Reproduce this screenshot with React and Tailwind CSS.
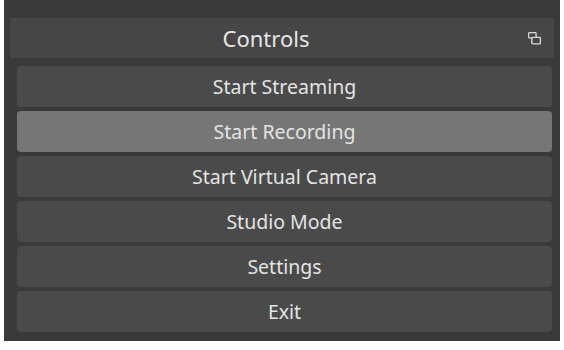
import React from 'react';

const buttons = [
  { label: 'Start Streaming' },
  { label: 'Start Recording', active: true },
  { label: 'Start Virtual Camera' },
  { label: 'Studio Mode' },
  { label: 'Settings' },
  { label: 'Exit' },
];

function FloatIcon() {
  return (
    <svg width="13" height="13" viewBox="0 0 12 12" className="text-[#d8d8d8]">
      <rect x="0.5" y="0.5" width="7" height="5" rx="1" fill="#464646" stroke="currentColor" strokeWidth="1.2" />
      <rect x="3.5" y="5" width="8" height="6" rx="1" fill="#464646" stroke="currentColor" strokeWidth="1.3" />
    </svg>
  );
}

export default function App() {
  return (
    <div className="w-[564px] h-[350px] bg-white pl-[4px] pr-[4px] font-['Noto_Sans',sans-serif]">
      <div className="h-[341px] bg-[#3a3a3a] pt-[18px] flex flex-col">
        <div className="mx-[6px] h-[40px] bg-[#464646] relative flex items-center justify-center pr-[32px] text-[#e6e6e6] text-[22px]">
          Controls
          <div className="absolute right-[13px] top-[14px] leading-none">
            <FloatIcon />
          </div>
        </div>
        <div className="flex flex-col gap-[4px] pl-[13px] pr-[8px] pt-[8px]">
          {buttons.map((b) => (
            <div
              key={b.label}
              className={
                'h-[41px] rounded-[4px] flex items-center justify-center text-[19.5px] text-[#e4e4e4] ' +
                (b.active ? 'bg-[#767676]' : 'bg-[#4a4a4a]')
              }
            >
              {b.label}
            </div>
          ))}
        </div>
      </div>
    </div>
  );
}
